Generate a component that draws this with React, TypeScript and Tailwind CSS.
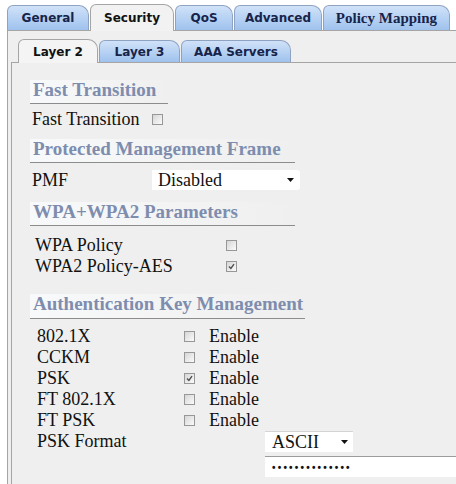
import type { ReactNode } from "react";

const topTabs = [
  { label: "General", w: "w-[82px]" },
  { label: "Security", w: "w-[84px]", active: true },
  { label: "QoS", w: "w-[58px]" },
  { label: "Advanced", w: "w-[88px]" },
  { label: "Policy Mapping", w: "w-[127px]", serif: true },
];

const innerTabs = [
  { label: "Layer 2", w: "w-[80px]", active: true },
  { label: "Layer 3", w: "w-[81px]" },
  { label: "AAA Servers", w: "w-[110px]" },
];

const akm = [
  { label: "802.1X", checked: false },
  { label: "CCKM", checked: false },
  { label: "PSK", checked: true },
  { label: "FT 802.1X", checked: false },
  { label: "FT PSK", checked: false },
];

const Box = ({ checked = false }: { checked?: boolean }) => (
  <span className="inline-flex h-[11px] w-[11px] shrink-0 items-center justify-center border border-[#979797] bg-linear-to-br from-[#d6d6d6] to-[#fbfbfb]">
    {checked && (
      <svg width="7" height="7" viewBox="0 0 7 7">
        <path d="M1 3.6 L2.9 5.5 L6 1.2" stroke="#4f4f4f" strokeWidth="1.4" fill="none" />
      </svg>
    )}
  </span>
);

const Arrow = () => (
  <svg width="7" height="4" viewBox="0 0 7 4">
    <path d="M0 0h7L3.5 4z" fill="#111" />
  </svg>
);

const Heading = ({ w, mt, pb = "pb-[3px]", children }: { w: string; mt: string; pb?: string; children: ReactNode }) => (
  <div
    className={`${w} ${mt} ${pb} border-b border-[#8c8c8c] bg-linear-to-r from-[#f8f9fa] to-transparent pl-[3px] text-[19px] font-bold leading-[20px] text-[#7e8dae]`}
  >
    {children}
  </div>
);

export default function App() {
  return (
    <div className="h-[484px] w-[456px] overflow-hidden bg-white font-['Liberation_Serif',serif] text-[#111]">
      {/* Top tabs */}
      <div className="flex h-[30px] items-end gap-[1px] pl-[7px]">
        {topTabs.map((t) => (
          <div
            key={t.label}
            className={`${t.w} flex shrink-0 items-center justify-center rounded-tl-[6px] rounded-tr-[10px] border border-b-0 font-bold ${
              t.serif ? "text-[15px] font-['Liberation_Serif',serif]" : "text-[12px] font-['DejaVu_Sans',sans-serif]"
            } ${
              t.active
                ? "relative z-10 -mb-px h-[27px] border-[#a5a5a5] bg-[#f2f2f2] text-[#111]"
                : "h-[25px] border-[#8ea3c2] bg-linear-to-b from-[#d0e2f8] to-[#9fc2ee] text-[#17244a]"
            }`}
          >
            {t.label}
          </div>
        ))}
      </div>

      <div className="ml-[7px] h-[454px] border-l border-t border-[#a5a5a5] bg-[#efefef]">
        {/* Inner tabs */}
        <div className="flex h-[31px] items-end gap-[1px] pl-[10px]">
          {innerTabs.map((t) => (
            <div
              key={t.label}
              className={`${t.w} flex shrink-0 items-center justify-center rounded-tl-[6px] rounded-tr-[10px] border border-b-0 font-['DejaVu_Sans',sans-serif] text-[12px] font-bold ${
                t.active
                  ? "relative z-10 -mb-px h-[24px] border-[#a5a5a5] bg-[#f4f4f4] text-[#111]"
                  : "h-[22px] border-[#8ea3c2] bg-linear-to-b from-[#d0e2f8] to-[#9fc2ee] text-[#17244a]"
              }`}
            >
              {t.label}
            </div>
          ))}
        </div>

        <div className="ml-[3px] h-full border-l border-t border-[#a5a5a5] bg-[#efefef] pl-[18px] text-[18px]">
          <Heading w="w-[138px]" mt="mt-[17px]">Fast Transition</Heading>
          <div className="mt-[5px] flex h-[20px] items-center pl-[2px] leading-[20px]">
            <span className="w-[120px]">Fast Transition</span>
            <Box />
          </div>

          <Heading w="w-[265px]" mt="mt-[10px]">Protected Management Frame</Heading>
          <div className="mt-[7px] flex h-[20px] items-center pl-[2px] leading-[20px]">
            <span className="w-[120px]">PMF</span>
            <div className="flex h-[20px] w-[148px] items-center justify-between rounded-r-[3px] bg-white pl-[6px] pr-[6px]">
              <span>Disabled</span>
              <Arrow />
            </div>
          </div>

          <Heading w="w-[265px]" mt="mt-[12px]">WPA+WPA2 Parameters</Heading>
          <div className="mt-[9px] pl-[5px] leading-[21px]">
            <div className="flex h-[21px] items-center">
              <span className="w-[191px]">WPA Policy</span>
              <Box />
            </div>
            <div className="flex h-[21px] items-center">
              <span className="w-[191px]">WPA2 Policy-AES</span>
              <Box checked />
            </div>
          </div>

          <Heading w="w-[275px]" mt="mt-[17px]" pb="pb-[4px]">Authentication Key Management</Heading>
          <div className="mt-[7px] pl-[7px] leading-[21px]">
            {akm.map((r) => (
              <div key={r.label} className="flex h-[21px] items-center">
                <span className="w-[147px]">{r.label}</span>
                <Box checked={r.checked} />
                <span className="ml-[14px]">Enable</span>
              </div>
            ))}
            <div className="flex h-[21px] items-center">
              <span className="w-[228px]">PSK Format</span>
              <div className="flex h-[21px] w-[88px] items-center justify-between border-t border-[#d4d4d4] bg-white pl-[7px] pr-[5px]">
                <span>ASCII</span>
                <Arrow />
              </div>
            </div>
          </div>
          <div className="mt-[4px] flex pl-[235px]">
            <div className="flex h-[21px] flex-1 items-center border-t border-[#9c9c9c] bg-white pl-[7px] font-['Liberation_Sans',sans-serif] text-[10px] font-bold tracking-[2.2px] text-[#111]">
              ••••••••••••••
            </div>
          </div>
        </div>
      </div>
    </div>
  );
}
